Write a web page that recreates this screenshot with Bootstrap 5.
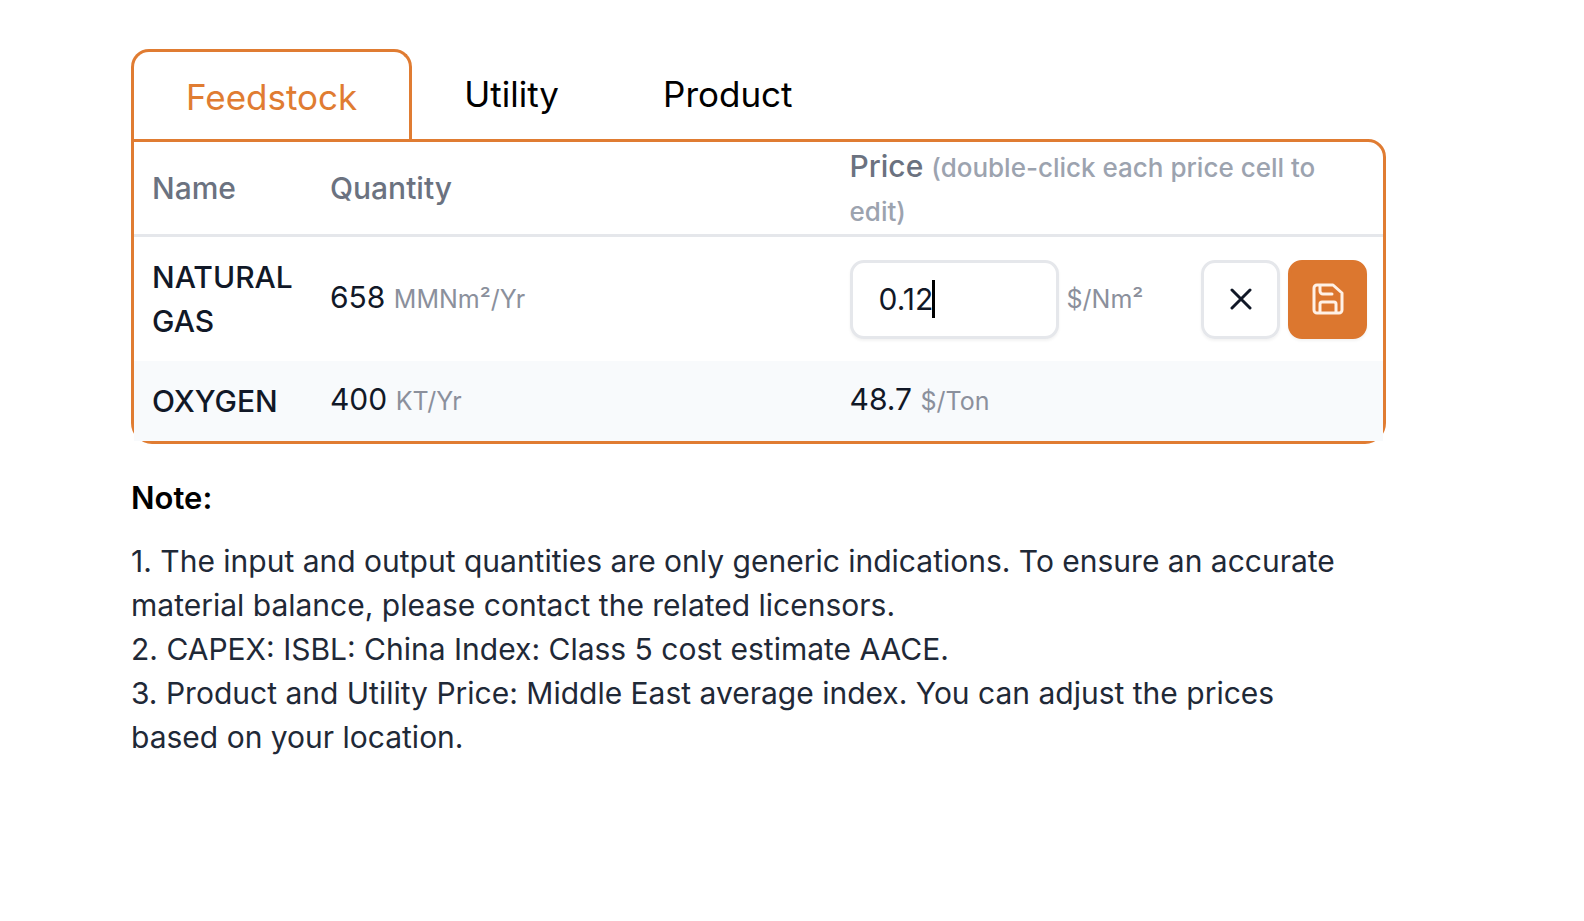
<!DOCTYPE html>
<html lang="en">
<head>
<meta charset="utf-8">
<meta name="viewport" content="width=device-width, initial-scale=1">
<title>Feedstock prices</title>
<link href="https://cdn.jsdelivr.net/npm/bootstrap@5.3.0/dist/css/bootstrap.min.css" rel="stylesheet">
<style>
  :root { --brand: #e07c32; --line: #e5e7eb; --ink: #111827; }
  body { font-family: Inter, "Liberation Sans", sans-serif; font-size: 30px; line-height: 44px; color: var(--ink); background: #fff; }
  .page { padding: 49px 198px 48px 131px; }
  .price-tabs { border: 0; }
  .price-tabs .nav-link { border: 3px solid transparent; border-bottom: 0; border-radius: 18px 18px 0 0; margin: 0; padding: 20px 49px 23px; font-size: 35px; line-height: 44px; color: #000; }
  .price-tabs .nav-link.active { border-color: var(--brand); color: var(--brand); padding: 23px 52px 20px; background: transparent; }
  .price-panel { border: 3px solid var(--brand); border-radius: 0 18px 21px 21px; }
  .price-table { table-layout: fixed; margin: 0; color: var(--ink); --bs-table-bg: transparent; }
  .price-table > :not(caption) > * > * { padding: 18px 16px 18px 18px; border: 0; vertical-align: middle; color: inherit; }
  .price-table > thead > tr > th { padding: 2px 18px; border-bottom: 3px solid var(--line); color: #6b7280; font-weight: 500; }
  .price-table > tbody > tr > .amount { padding-top: 16px; padding-bottom: 20px; }
  .price-table > tbody > tr + tr > * { background: #f8fafc; }
  .col-name { width: 14.25%; }
  .col-qty { width: 41.6%; }
  .price-table .hint { font-size: 26px; line-height: 26px; color: #9ca3af; }
  .unit { font-size: 25px; line-height: 26px; color: #8b909c; }
  .price-box { width: 209px; }
  .price-box .form-control { height: 79px; padding: 0 26px; font-size: 30px; color: var(--ink); border: 3px solid var(--line); border-radius: 14px; box-shadow: 0 2px 3px #0000000d; }
  .caret { top: 20px; left: 82px; width: 3px; height: 38px; background: #000; }
  .tool { width: 79px; height: 79px; border: 3px solid var(--line); border-radius: 14px; box-shadow: 0 2px 3px #0000000d; }
  .tool-save, .tool-save:hover { background: #dc772f; border-color: #dc772f; }
  .notes { padding-right: 24px; }
  .notes h2 { font-size: 31px; line-height: 44px; font-weight: 600; color: #000; margin: 32px 0 19px; }
  .notes p { margin: 0; color: #1f2937; }
</style>
</head>
<body>
<main class="page">
  <ul class="nav nav-tabs price-tabs" role="tablist">
    <li class="nav-item" role="presentation"><button class="nav-link active" type="button" role="tab" aria-selected="true" aria-controls="feedstock">Feedstock</button></li>
    <li class="nav-item" role="presentation"><button class="nav-link" type="button" role="tab" aria-selected="false">Utility</button></li>
    <li class="nav-item" role="presentation"><button class="nav-link" type="button" role="tab" aria-selected="false">Product</button></li>
  </ul>
  <section class="price-panel" id="feedstock" role="tabpanel">
    <table class="table price-table">
      <colgroup><col class="col-name"><col class="col-qty"><col></colgroup>
      <thead>
        <tr><th scope="col">Name</th><th scope="col">Quantity</th><th scope="col">Price <span class="hint">(double-click each price cell to edit)</span></th></tr>
      </thead>
      <tbody>
        <tr>
          <td class="fw-medium">NATURAL GAS</td>
          <td class="amount">658 <span class="unit">MMNm²/Yr</span></td>
          <td>
            <div class="d-flex align-items-center">
              <div class="price-box position-relative flex-shrink-0">
                <input class="form-control" id="gas-price" type="text" inputmode="decimal" value="0.12">
                <span class="caret position-absolute" aria-hidden="true"></span>
              </div>
              <label class="unit ms-2" for="gas-price">$/Nm²</label>
              <div class="d-flex gap-2 ms-auto">
                <button class="btn tool p-0 d-flex align-items-center justify-content-center" type="button" aria-label="Cancel">
                  <svg width="22" height="22" viewBox="0 0 22 22" fill="none" stroke="#111827" stroke-width="3" stroke-linecap="round"><path d="M2 2l18 18M20 2L2 20"/></svg>
                </button>
                <button class="btn tool tool-save p-0 d-flex align-items-center justify-content-center" type="button" aria-label="Save">
                  <svg width="32" height="32" viewBox="0 0 32 32" fill="none" stroke="#fff1e6" stroke-width="3" stroke-linejoin="round" stroke-linecap="round"><path d="M5 2h16l9 8v17a3 3 0 0 1-3 3H5a3 3 0 0 1-3-3V5a3 3 0 0 1 3-3zM8 2v6a3 3 0 0 0 3 3h9M8 30V21a2 2 0 0 1 2-2h12a2 2 0 0 1 2 2v9"/></svg>
                </button>
              </div>
            </div>
          </td>
        </tr>
        <tr>
          <td class="fw-medium">OXYGEN</td>
          <td class="amount">400 <span class="unit">KT/Yr</span></td>
          <td class="amount">48.7 <span class="unit">$/Ton</span></td>
        </tr>
      </tbody>
    </table>
  </section>
  <section class="notes">
    <h2>Note:</h2>
    <p>1. The input and output quantities are only generic indications. To ensure an accurate material balance, please contact the related licensors.</p>
    <p>2. CAPEX: ISBL: China Index: Class 5 cost estimate AACE.</p>
    <p>3. Product and Utility Price: Middle East average index. You can adjust the prices based on your location.</p>
  </section>
</main>
<script src="https://cdn.jsdelivr.net/npm/bootstrap@5.3.0/dist/js/bootstrap.bundle.min.js"></script>
</body>
</html>
